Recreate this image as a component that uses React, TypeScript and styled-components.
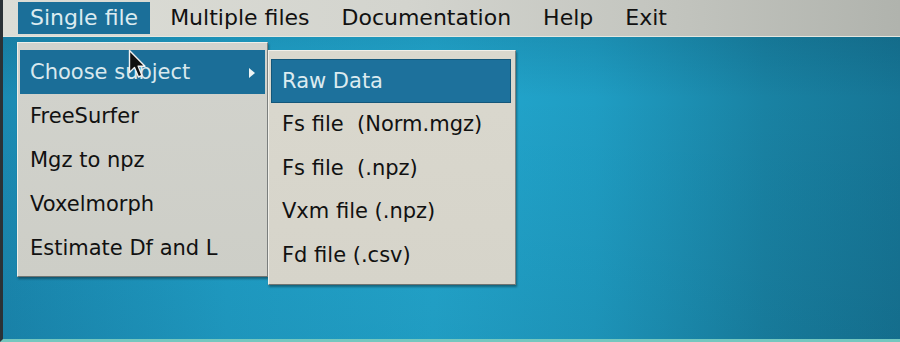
import React from 'react';
import styled, { createGlobalStyle } from 'styled-components';

const GlobalStyle = createGlobalStyle`
  html, body {
    margin: 0;
    padding: 0;
    width: 900px;
    height: 342px;
    overflow: hidden;
  }
  body {
    font-family: 'DejaVu Sans', 'Liberation Sans', sans-serif;
  }
`;

const topMenus = ['Single file', 'Multiple files', 'Documentation', 'Help', 'Exit'];
const singleItems = ['Choose subject', 'FreeSurfer', 'Mgz to npz', 'Voxelmorph', 'Estimate Df and L'];
const subjectItems = ['Raw Data', 'Fs file  (Norm.mgz)', 'Fs file  (.npz)', 'Vxm file (.npz)', 'Fd file (.csv)'];

const App: React.FC = () => {
  return (
    <>
      <GlobalStyle />
      <Screen>
        <MenuBar>
          {topMenus.map((m, i) => (
            <TopItem key={m} $active={i === 0}>{m}</TopItem>
          ))}
        </MenuBar>
        <Desktop />

        <Dropdown>
          {singleItems.map((it, i) => (
            <DropItem key={it} $active={i === 0}>
              {it}
              {i === 0 && (
                <>
                  <SubArrow />
                  <SubMenu>
                    {subjectItems.map((s, j) => (
                      <SubItem key={s} $active={j === 0}>{s}</SubItem>
                    ))}
                  </SubMenu>
                </>
              )}
            </DropItem>
          ))}
        </Dropdown>

        <Cursor width="19" height="30" viewBox="0 0 19 30">
          <path d="M1.5 1.5 L1.5 23.5 L6.5 18.5 L10.5 28 L14 26.4 L10.2 17.2 L17 17.2 Z" fill="#111" stroke="#f2f2f2" strokeWidth="1.4" strokeLinejoin="round" />
        </Cursor>
      </Screen>
    </>
  );
};

export default App;

const Screen = styled.div`
  position: relative;
  width: 900px;
  height: 342px;
  box-sizing: border-box;
  border-left: 3px solid #2b3236;
  border-bottom: 3px solid #74c7bf;
  display: flex;
  flex-direction: column;
  overflow: hidden;
`;

const MenuBar = styled.div`
  height: 37px;
  flex: none;
  display: flex;
  align-items: stretch;
  gap: 8px;
  padding: 2px 0 2px 15px;
  box-sizing: border-box;
  background: linear-gradient(90deg, #dcddd6 0%, #d3d4ce 45%, #c2c4be 75%, #b0b3ad 100%);
  border-bottom: 1px solid #e4e6e0;
`;

const TopItem = styled.div<{ $active?: boolean }>`
  display: flex;
  align-items: center;
  padding: 0 12px;
  font-size: 22px;
  line-height: 1;
  color: ${p => (p.$active ? '#dcebf0' : '#111')};
  background: ${p => (p.$active ? '#1b6f99' : 'transparent')};
`;

const Desktop = styled.div`
  flex: 1;
  background:
    linear-gradient(180deg, rgba(0, 40, 60, 0.12) 0%, rgba(0, 0, 0, 0) 20%, rgba(0, 20, 40, 0.08) 100%),
    linear-gradient(90deg, #1b8ab2 0%, #20a0c8 25%, #23a8cf 48%, #1f9dc3 66%, #1982a3 85%, #167595 100%);
`;

const Dropdown = styled.div`
  position: absolute;
  left: 14px;
  top: 42px;
  width: 251px;
  padding: 7px 2px 6px 2px;
  box-sizing: border-box;
  background: linear-gradient(180deg, #d2d3cd 0%, #cdcec7 100%);
  border-top: 1px solid #eeefe9;
  border-left: 1px solid #eeefe9;
  border-right: 1px solid #7d8280;
  border-bottom: 1px solid #6f7472;
  box-shadow: 1px 2px 2px rgba(0, 0, 0, 0.35);
`;

const DropItem = styled.div<{ $active?: boolean }>`
  position: relative;
  height: 44px;
  display: flex;
  align-items: center;
  padding-left: 10px;
  font-size: 21px;
  color: ${p => (p.$active ? '#d9e9ee' : '#111')};
  background: ${p => (p.$active ? '#1b6e98' : 'transparent')};
`;

const SubArrow = styled.span`
  position: absolute;
  right: 10px;
  top: 18px;
  width: 0;
  height: 0;
  border-top: 5px solid transparent;
  border-bottom: 5px solid transparent;
  border-left: 6px solid #eef4f4;
`;

const SubMenu = styled.div`
  position: absolute;
  left: 248px;
  top: 0;
  width: 248px;
  padding: 8px 4px 7px 2px;
  box-sizing: border-box;
  background: linear-gradient(180deg, #dad8ce 0%, #d6d4ca 100%);
  border-top: 1px solid #f1f0ea;
  border-left: 1px solid #f1f0ea;
  border-right: 1px solid #7d8280;
  border-bottom: 1px solid #6f7472;
  box-shadow: 1px 2px 2px rgba(0, 0, 0, 0.35);
`;

const SubItem = styled.div<{ $active?: boolean }>`
  height: 43.5px;
  display: flex;
  align-items: center;
  padding-left: 10px;
  font-size: 21px;
  white-space: pre;
  color: ${p => (p.$active ? '#dcebf0' : '#111')};
  background: ${p => (p.$active ? '#1d719c' : 'transparent')};
  border: ${p => (p.$active ? '1px solid #14577a' : '1px solid transparent')};
  box-sizing: border-box;
`;

const Cursor = styled.svg`
  position: absolute;
  left: 125px;
  top: 49px;
`;
